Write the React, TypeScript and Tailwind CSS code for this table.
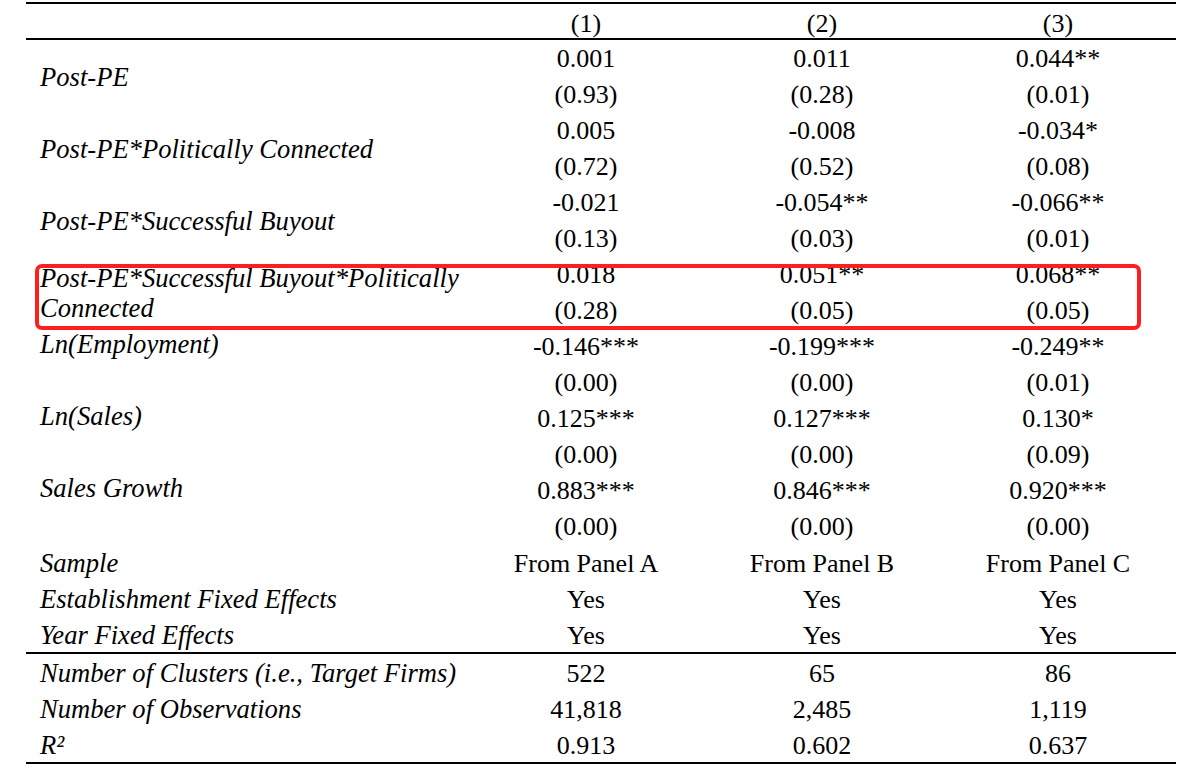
const serif = { fontFamily: '"Liberation Serif", "Times New Roman", serif' };

type Coef = {
  label: React.ReactNode;
  vals: [string, string][];
  top?: boolean;
  highlight?: boolean;
};

const coefs: Coef[] = [
  { label: 'Post-PE', vals: [['0.001', '(0.93)'], ['0.011', '(0.28)'], ['0.044**', '(0.01)']] },
  { label: 'Post-PE*Politically Connected', vals: [['0.005', '(0.72)'], ['-0.008', '(0.52)'], ['-0.034*', '(0.08)']] },
  { label: 'Post-PE*Successful Buyout', vals: [['-0.021', '(0.13)'], ['-0.054**', '(0.03)'], ['-0.066**', '(0.01)']] },
  {
    label: (
      <>
        Post-PE*Successful Buyout*Politically
        <br />
        Connected
      </>
    ),
    vals: [['0.018', '(0.28)'], ['0.051**', '(0.05)'], ['0.068**', '(0.05)']],
    highlight: true,
  },
  { label: 'Ln(Employment)', vals: [['-0.146***', '(0.00)'], ['-0.199***', '(0.00)'], ['-0.249**', '(0.01)']], top: true },
  { label: 'Ln(Sales)', vals: [['0.125***', '(0.00)'], ['0.127***', '(0.00)'], ['0.130*', '(0.09)']], top: true },
  { label: 'Sales Growth', vals: [['0.883***', '(0.00)'], ['0.846***', '(0.00)'], ['0.920***', '(0.00)']], top: true },
];

const controls: [string, string, string, string][] = [
  ['Sample', 'From Panel A', 'From Panel B', 'From Panel C'],
  ['Establishment Fixed Effects', 'Yes', 'Yes', 'Yes'],
  ['Year Fixed Effects', 'Yes', 'Yes', 'Yes'],
];

const stats: [string, string, string, string][] = [
  ['Number of Clusters (i.e., Target Firms)', '522', '65', '86'],
  ['Number of Observations', '41,818', '2,485', '1,119'],
  ['R²', '0.913', '0.602', '0.637'],
];

const cols = 'grid grid-cols-[442px_236px_236px_236px]';

function SimpleRow({ row }: { row: [string, string, string, string] }) {
  return (
    <div className={`${cols} h-[36px] items-center`}>
      <div className="pl-[14px] text-[26.6px] italic">{row[0]}</div>
      <div className="text-center">{row[1]}</div>
      <div className="text-center">{row[2]}</div>
      <div className="text-center">{row[3]}</div>
    </div>
  );
}

function CoefBlock({ c }: { c: Coef }) {
  return (
    <div className={`${cols} relative grid-rows-[36px_36px]`}>
      <div
        className={`row-span-2 pl-[14px] text-[26.6px] italic leading-[30px] ${
          c.top ? 'self-start pt-[1px]' : 'self-center pt-[2px]'
        }`}
      >
        {c.label}
      </div>
      {c.vals.map(([v, p], i) => (
        <div key={i} className="row-span-2 grid grid-rows-[36px_36px] text-center">
          <div className="flex items-center justify-center">{v}</div>
          <div className="flex items-center justify-center">{p}</div>
        </div>
      ))}
      {c.highlight && (
        <div className="pointer-events-none absolute left-[9px] top-[8px] h-[66px] w-[1106px] rounded-[7px] border-[4px] border-[#ff1e1e]" />
      )}
    </div>
  );
}

export default function App() {
  return (
    <div className="min-h-screen bg-white pl-[26px] pt-[2px] text-[26px] text-black" style={serif}>
      <div className="w-[1150px]">
        <div className={`${cols} h-[38px] items-center border-y-2 border-black`}>
          <div />
          <div className="text-center">(1)</div>
          <div className="text-center">(2)</div>
          <div className="text-center">(3)</div>
        </div>
        {coefs.map((c, i) => (
          <CoefBlock key={i} c={c} />
        ))}
        {controls.map((r, i) => (
          <SimpleRow key={i} row={r} />
        ))}
        <div className="border-y-2 border-black">
          {stats.map((r, i) => (
            <SimpleRow key={i} row={r} />
          ))}
        </div>
      </div>
    </div>
  );
}
